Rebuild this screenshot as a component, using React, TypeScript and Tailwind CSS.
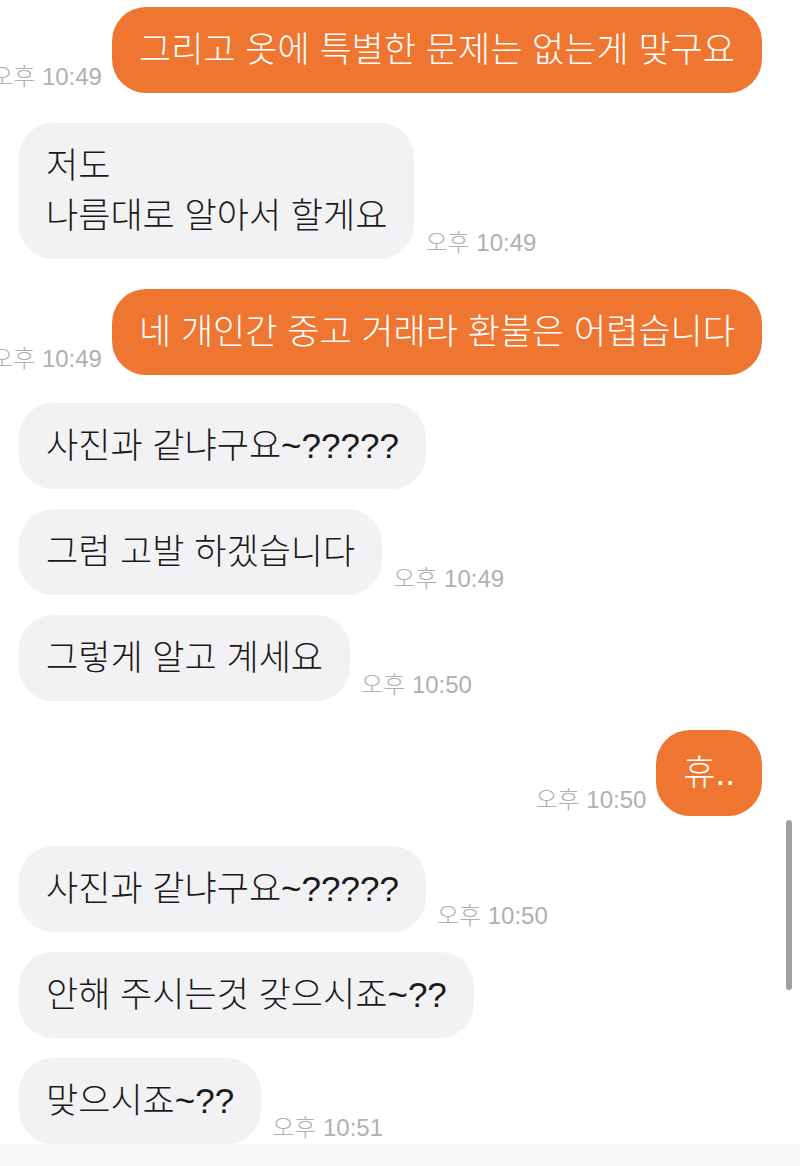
import React from 'react';

type Msg = {
  me: boolean;
  lines: string[];
  time?: string;
  mt: string;
};

const MESSAGES: Msg[] = [
  { me: true, lines: ['그리고 옷에 특별한 문제는 없는게 맞구요'], time: '오후 10:49', mt: 'mt-[7px]' },
  { me: false, lines: ['저도', '나름대로 알아서 할게요'], time: '오후 10:49', mt: 'mt-[30px]' },
  { me: true, lines: ['네 개인간 중고 거래라 환불은 어렵습니다'], time: '오후 10:49', mt: 'mt-[30px]' },
  { me: false, lines: ['사진과 같냐구요~?????'], mt: 'mt-[28px]' },
  { me: false, lines: ['그럼 고발 하겠습니다'], time: '오후 10:49', mt: 'mt-[20px]' },
  { me: false, lines: ['그렇게 알고 계세요'], time: '오후 10:50', mt: 'mt-[20px]' },
  { me: true, lines: ['휴..'], time: '오후 10:50', mt: 'mt-[29px]' },
  { me: false, lines: ['사진과 같냐구요~?????'], time: '오후 10:50', mt: 'mt-[30px]' },
  { me: false, lines: ['안해 주시는것 갖으시죠~??'], mt: 'mt-[20px]' },
  { me: false, lines: ['맞으시죠~??'], time: '오후 10:51', mt: 'mt-[20px]' },
];

const Time: React.FC<{ time: string; me: boolean }> = ({ time, me }) => (
  <span
    className={`shrink-0 whitespace-nowrap text-[24px] font-light leading-none text-[#b0b0b0] mb-[4px] ${
      me ? 'mr-[10px]' : 'ml-[11px]'
    }`}
  >
    {time}
  </span>
);

const Bubble: React.FC<{ msg: Msg }> = ({ msg }) => (
  <div
    className={`shrink-0 whitespace-nowrap rounded-[34px] px-[27px] py-[18px] text-[35px] font-light leading-[50px] ${
      msg.me ? 'bg-[#ee7631] text-white' : 'bg-[#f2f2f5] text-[#1a1a1a]'
    }`}
  >
    {msg.lines.map((l, i) => (
      <div key={i}>{l}</div>
    ))}
  </div>
);

export default function App() {
  return (
    <div className="relative w-[800px] h-[1166px] overflow-hidden bg-white font-['Liberation_Sans','Noto_Sans_CJK_KR',sans-serif]">
      <div className="flex flex-col">
        {MESSAGES.map((m, i) =>
          m.me ? (
            <div key={i} className={`flex items-end justify-end pr-[38px] ${m.mt}`}>
              {m.time && <Time time={m.time} me />}
              <Bubble msg={m} />
            </div>
          ) : (
            <div key={i} className={`flex items-end pl-[19px] ${m.mt}`}>
              <Bubble msg={m} />
              {m.time && <Time time={m.time} me={false} />}
            </div>
          )
        )}
        <div className="h-[30px] bg-[#f9f9f9]" />
      </div>

      {/* scroll indicator */}
      <div className="absolute left-[786px] top-[820px] w-[6px] h-[170px] rounded-full bg-[#a0a0a0]" />
    </div>
  );
}
